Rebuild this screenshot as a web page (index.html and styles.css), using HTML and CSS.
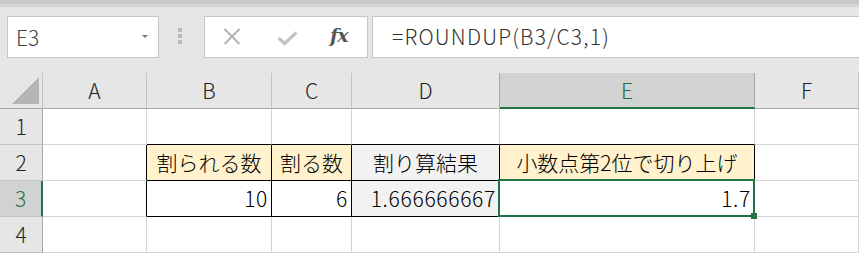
FILE: index.html
```html
<!DOCTYPE html>
<html lang="ja">
<head>
<meta charset="UTF-8" />
<title>ROUNDUP</title>
<link rel="stylesheet" href="styles.css">
</head>
<body>
  <div class="toolbar">
    <div class="namebox">
      <span>E3</span>
      <span class="caret"></span>
    </div>
    <div class="grip"><i></i><i></i><i></i></div>
    <div class="buttons">
      <svg class="ico-x" width="18" height="17" viewBox="0 0 18 17">
        <path d="M1.5 1 L16.5 16 M16.5 1 L1.5 16" stroke="#b4b4b4" stroke-width="2" fill="none"/>
      </svg>
      <svg class="ico-ok" width="21" height="15" viewBox="0 0 21 15">
        <path d="M1.5 7 L7.5 12.5 L19.5 1.5" stroke="#c4c4c4" stroke-width="3.2" fill="none"/>
      </svg>
      <span class="fx">fx</span>
    </div>
    <div class="formula">=ROUNDUP(B3/C3,1)</div>
  </div>

  <div class="sheet">
    <!-- header row -->
    <div class="hd corner"><span class="tri"></span></div>
    <div class="hd">A</div>
    <div class="hd">B</div>
    <div class="hd">C</div>
    <div class="hd">D</div>
    <div class="hd on-col">E</div>
    <div class="hd">F</div>

    <!-- row 1 -->
    <div class="rh">1</div>
    <div class="c"></div>
    <div class="c above"></div>
    <div class="c above"></div>
    <div class="c above"></div>
    <div class="c above"></div>
    <div class="c"></div>

    <!-- row 2 -->
    <div class="rh">2</div>
    <div class="c left"></div>
    <div class="c t head">割られる数</div>
    <div class="c t head">割る数</div>
    <div class="c t grey">割り算結果</div>
    <div class="c t head">小数点第2位で切り上げ</div>
    <div class="c"></div>

    <!-- row 3 -->
    <div class="rh on-row">3</div>
    <div class="c left"></div>
    <div class="c t num">10</div>
    <div class="c t num">6</div>
    <div class="c t num grey">1.666666667</div>
    <div class="c t num sel">1.7</div>
    <div class="c"></div>

    <!-- row 4 -->
    <div class="rh">4</div>
    <div class="c"></div>
    <div class="c"></div>
    <div class="c"></div>
    <div class="c"></div>
    <div class="c"></div>
    <div class="c"></div>
  </div>
</body>
</html>
```

FILE: styles.css
```css
/* Base */
* {
  box-sizing: border-box;
}
html, body {
  margin: 0;
  height: 100%;
  overflow: hidden;
  background: #fff;
  font-family: "Noto Sans CJK JP", "Noto Sans", sans-serif;
  font-weight: 300;
  color: #000;
}

/* Formula bar area */
.toolbar {
  height: 73px;
  display: flex;
  align-items: flex-start;
  padding-top: 16px;
  background: linear-gradient(#cacaca 0 4px, #d5d5d5 4px 7px, #e6e6e6 7px);
}

.namebox {
  margin-left: 7px;
  width: 152px;
  height: 42px;
  background: #fff;
  border: 1px solid #c6c6c6;
  display: flex;
  align-items: center;
  justify-content: space-between;
  padding: 0 10px 0 8px;
  font-size: 21px;
  color: #444;
}
.caret {
  width: 0;
  height: 0;
  border-left: 3px solid transparent;
  border-right: 3px solid transparent;
  border-top: 3px solid #777;
  margin-top: -2px;
}

.grip {
  margin: 12px 0 0 19px;
  width: 4px;
  display: flex;
  flex-direction: column;
  gap: 2px;
}
.grip i {
  display: block;
  width: 4px;
  height: 4px;
  background: #b9b9b9;
}

.buttons {
  margin-left: 22px;
  width: 164px;
  height: 42px;
  background: #fff;
  border: 1px solid #c6c6c6;
  display: flex;
  align-items: center;
  padding-left: 18px;
}
.ico-x {
  margin-top: -1px;
}
.ico-ok {
  margin-left: 36px;
  margin-top: 2px;
}
.fx {
  margin-left: 32px;
  margin-top: -4px;
  font-family: "DejaVu Serif", serif;
  font-style: italic;
  font-weight: bold;
  font-size: 19px;
  color: #555;
  letter-spacing: -1px;
}

.formula {
  margin-left: 4px;
  flex: 1;
  height: 42px;
  background: #fff;
  border: 1px solid #c6c6c6;
  border-right: none;
  padding-left: 19px;
  font-size: 21px;
  letter-spacing: 1.2px;
  line-height: 38px;
  color: #333;
}

/* Grid */
.sheet {
  display: grid;
  grid-template-columns: 43px 104px 125px 80px 148px 255px 1fr;
  grid-auto-rows: 36px;
}

.hd, .rh {
  background: #e6e6e6;
  color: #222;
  text-align: center;
  font-size: 21px;
  line-height: 34px;
}
.hd {
  border-right: 1px solid #c3c3c3;
  border-bottom: 1px solid #a8a8a8;
}
.rh {
  border-right: 1px solid #a8a8a8;
  border-bottom: 1px solid #c3c3c3;
}

.corner {
  position: relative;
  border-right-color: #c3c3c3;
}
.tri {
  position: absolute;
  left: 12px;
  top: 4px;
  width: 27px;
  height: 27px;
  background: #b5b5b5;
  clip-path: polygon(100% 0, 100% 100%, 0 100%);
}

.on-col {
  background: #d2d2d2;
  color: #217346;
  border-right-color: #a8a8a8;
  border-bottom: 2px solid #217346;
  box-shadow: -1px 0 0 #a8a8a8;
}
.on-row {
  background: #d2d2d2;
  color: #217346;
  border-right: 2px solid #217346;
}

.c {
  border-right: 1px solid #d4d4d4;
  border-bottom: 1px solid #d4d4d4;
  font-size: 21px;
  line-height: 35px;
  padding: 0 4px;
  white-space: nowrap;
}
.c.above {
  border-bottom-color: #000;
}
.c.left {
  border-right-color: #000;
}
.c.t {
  border-right-color: #000;
  border-bottom-color: #000;
  text-align: center;
}
.c.head {
  background: #fff2cc;
}
.c.grey {
  background: #f2f2f2;
}
.c.num {
  text-align: right;
  letter-spacing: 0.7px;
  padding-right: 3px;
}

/* Active cell */
.sel {
  position: relative;
}
.sel::after {
  content: "";
  position: absolute;
  left: -2px;
  top: -2px;
  right: -1px;
  bottom: -1px;
  border: 2px solid #217346;
}
.sel::before {
  content: "";
  position: absolute;
  right: -3px;
  bottom: -3px;
  width: 6px;
  height: 6px;
  background: #217346;
  z-index: 2;
}
```
